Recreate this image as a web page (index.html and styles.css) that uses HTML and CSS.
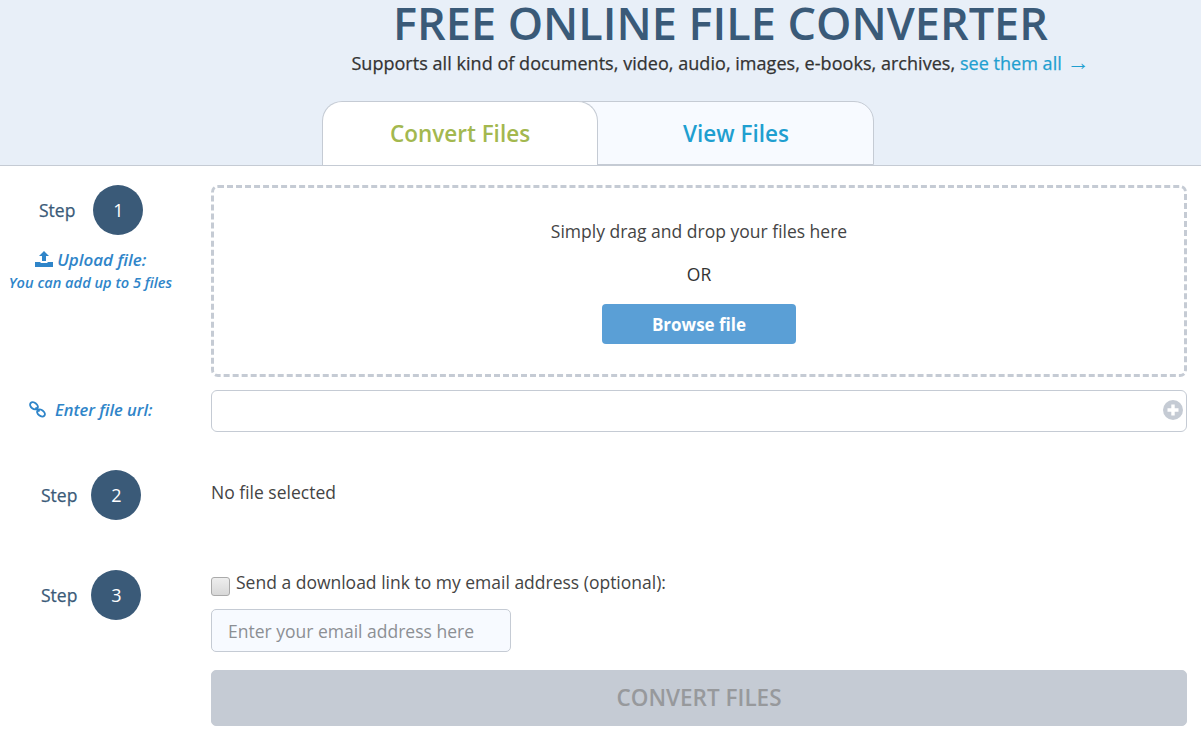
FILE: index.html
```html
<!DOCTYPE html>
<html lang="en">
<head>
    <meta charset="UTF-8">
    <meta name="viewport" content="width=device-width, initial-scale=1.0">
    <title>Free Online File Converter</title>
    <link rel="stylesheet" href="styles.css">
</head>
<body>
    <header class="hero">
        <h1>FREE ONLINE FILE CONVERTER</h1>
        <p>Supports all kind of documents, video, audio, images, e-books, archives, <a href="#">see them all <span class="arrow">&#8594;</span></a></p>
        <nav class="tabs">
            <a class="tab active" href="#">Convert Files</a>
            <a class="tab" href="#">View Files</a>
        </nav>
    </header>

    <main class="steps">
        <!-- Step 1 -->
        <section class="row row-upload">
            <div class="side">
                <div class="step-head first"><span>Step</span><b class="circle">1</b></div>
                <div class="upload-title">
                    <svg class="icon" viewBox="0 0 18 16" width="18" height="16"><path d="M9 0l5 5h-3v5H7V5H4z"/><path d="M0 11h5.5v1h7v-1H18v5H0z"/></svg>
                    Upload file:
                </div>
                <div class="upload-note">You can add up to 5 files</div>
            </div>
            <div class="dropzone">
                <p class="drop-text">Simply drag and drop your files here</p>
                <p class="drop-or">OR</p>
                <button class="browse">Browse file</button>
            </div>
        </section>

        <section class="row row-url">
            <div class="side url-label">
                <svg class="link" viewBox="0 0 17 17" width="17" height="17" fill="none" stroke="#2f85c9" stroke-width="1.9"><ellipse cx="5" cy="4.8" rx="4.3" ry="3" transform="rotate(38 5 4.8)"/><ellipse cx="12" cy="12" rx="4.3" ry="3" transform="rotate(38 12 12)"/><path d="M6.5 6.5l4 4"/></svg>
                <span>Enter file url:</span>
            </div>
            <div class="url-box">
                <input type="text">
                <svg class="plus" viewBox="0 0 20 20" width="20" height="20"><circle cx="10" cy="10" r="10" fill="#c5cbd4"/><path d="M10 4.5v11M4.5 10h11" stroke="#fff" stroke-width="3.4"/></svg>
            </div>
        </section>

        <!-- Step 2 -->
        <section class="row row-two">
            <div class="side"><div class="step-head"><span>Step</span><b class="circle">2</b></div></div>
            <div class="no-file">No file selected</div>
        </section>

        <!-- Step 3 -->
        <section class="row row-three">
            <div class="side"><div class="step-head"><span>Step</span><b class="circle">3</b></div></div>
            <div class="finish">
                <label class="check"><i class="box"></i>Send a download link to my email address (optional):</label>
                <input class="email" type="text" placeholder="Enter your email address here">
                <button class="convert">CONVERT FILES</button>
            </div>
        </section>
    </main>
</body>
</html>
```

FILE: styles.css
```css
* {
    box-sizing: border-box;
}
body {
    margin: 0;
    font-family: "Open Sans", sans-serif;
    color: #444;
    background: white;
    overflow: hidden;
}
.hero {
    height: 166px;
    background: #e8eff8;
    border-bottom: 1px solid #c5cbd4;
    display: flex;
    flex-direction: column;
    align-items: center;
}
.hero h1 {
    margin: 0;
    padding: 0 0 0 240px;
    font-size: 45px;
    line-height: 46px;
    font-weight: 600;
    color: #3a5a78;
    white-space: nowrap;
}
.hero p {
    margin: 5px 0 0;
    padding-left: 240px;
    font-size: 18px;
    line-height: 24px;
    font-weight: 500;
    letter-spacing: 0.04px;
    -webkit-text-stroke: 0.25px;
    color: #333;
}
.hero p a {
    color: #1f9fd0;
    text-decoration: none;
}
.arrow {
    font-family: "Liberation Sans", sans-serif;
    font-size: 23px;
    line-height: 20px;
    font-weight: 400;
    -webkit-text-stroke: 0;
}
.tabs {
    display: flex;
    margin-top: 26px;
    align-self: flex-start;
    margin-left: 322px;
    height: 64px;
}
.tab {
    width: 296px;
    height: 64px;
    margin-left: -20px;
    padding-left: 20px;
    text-align: center;
    font-size: 22.5px;
    line-height: 64px;
    font-weight: 600;
    text-decoration: none;
    color: #1f9fd0;
    background: #f7faff;
    border: 1px solid #c5cbd4;
    border-radius: 0 20px 0 0;
}
.tab.active {
    width: 276px;
    margin-left: 0;
    padding-left: 0;
    color: #a3b84f;
    background: white;
    border-bottom: none;
    border-radius: 20px 20px 0 0;
    position: relative;
    z-index: 1;
}
.steps {
    padding-right: 14px;
}
.row {
    display: grid;
    grid-template-columns: 211px 1fr;
}
.side {
    color: #2f85c9;
}
.step-head {
    display: flex;
    align-items: center;
    gap: 14px;
    padding-left: 41px;
    color: #3a5a78;
    font-size: 17.5px;
    font-weight: 500;
    -webkit-text-stroke: 0.25px;
}
.step-head.first {
    gap: 18px;
    padding-left: 39px;
}
.circle {
    width: 50px;
    height: 50px;
    border-radius: 50%;
    background: #3a5a78;
    color: white;
    font-size: 18px;
    font-weight: 400;
    text-align: center;
    line-height: 50px;
    -webkit-text-stroke: 0;
}
.row-upload {
    padding-top: 19px;
}
.upload-title {
    margin-top: 12px;
    padding-right: 30px;
    text-align: center;
    font-size: 17px;
    line-height: 25px;
    font-weight: 600;
    font-style: italic;
}
.icon {
    fill: #2f85c9;
    vertical-align: -1px;
}
.upload-note {
    text-align: center;
    font-size: 14.6px;
    line-height: 20px;
    font-weight: 600;
    font-style: italic;
    padding-right: 30px;
}
.dropzone {
    height: 192px;
    border: 3px dashed #c5cbd4;
    border-radius: 7px;
    display: flex;
    flex-direction: column;
    align-items: center;
}
.drop-text {
    margin: 31px 0 0;
    font-size: 17.5px;
    line-height: 24px;
}
.drop-or {
    margin: 19px 0 0;
    font-size: 17.5px;
    line-height: 24px;
    color: #333;
}
.browse {
    margin-top: 18px;
    width: 194px;
    height: 40px;
    border: none;
    border-radius: 4px;
    background: #5a9fd6;
    color: white;
    font-family: inherit;
    font-size: 17px;
    font-weight: 700;
}
.row-url {
    margin-top: 13px;
    align-items: center;
}
.url-label {
    display: flex;
    align-items: center;
    gap: 9px;
    padding-left: 29px;
    padding-bottom: 4px;
    font-size: 16.5px;
    font-weight: 600;
    font-style: italic;
}
.url-box {
    position: relative;
}
.url-box input {
    display: block;
    width: 100%;
    height: 42px;
    border: 1px solid #c5cbd4;
    border-radius: 6px;
    background: white;
}
.plus {
    position: absolute;
    right: 4px;
    top: 10px;
}
.row-two {
    margin-top: 38px;
}
.no-file {
    padding-top: 10px;
    font-size: 17.5px;
    line-height: 24px;
}
.row-three {
    margin-top: 50px;
}
.finish {
    display: flex;
    flex-direction: column;
}
.check {
    display: flex;
    align-items: flex-start;
    gap: 6px;
    font-size: 17.5px;
    line-height: 24px;
    height: 39px;
}
.box {
    width: 19px;
    height: 19px;
    margin: 7px 0 0 0;
    border: 1px solid #aaa;
    border-radius: 3px;
    background: linear-gradient(#eee, #d8d8d8);
}
.email {
    width: 300px;
    height: 43px;
    padding: 0 16px;
    border: 1px solid #c5cbd4;
    border-radius: 5px;
    background: #f7faff;
    font-family: inherit;
    font-size: 17.5px;
}
.email::placeholder {
    color: #8c8f94;
    opacity: 1;
}
.convert {
    margin-top: 18px;
    height: 56px;
    border: 1px solid #c5cbd4;
    border-radius: 5px;
    background: #c5cbd4;
    color: #97999c;
    font-family: inherit;
    font-size: 22.5px;
    font-weight: 600;
    padding-bottom: 3px;
}
```
